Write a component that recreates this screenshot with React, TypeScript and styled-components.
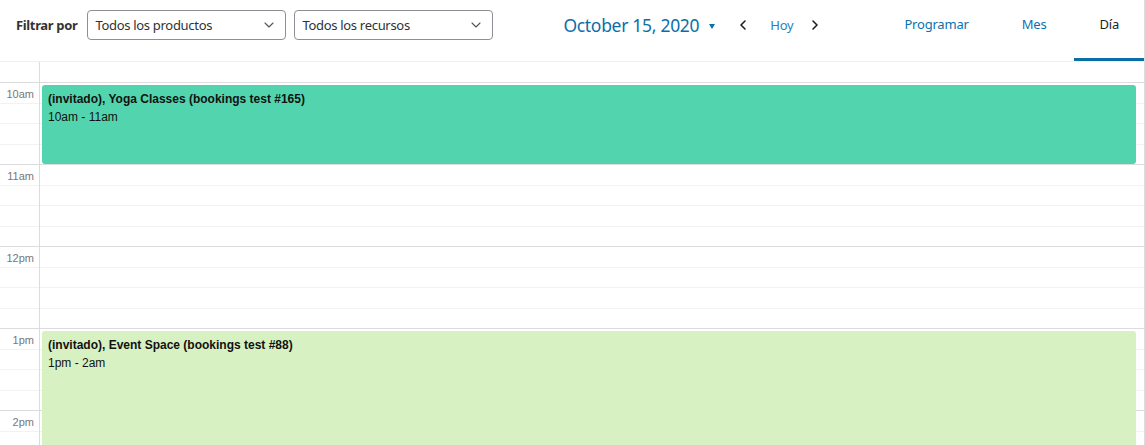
import React from "react";
import styled, { createGlobalStyle } from "styled-components";
import { ChevronDown, ChevronLeft, ChevronRight } from "lucide-react";

const GlobalStyle = createGlobalStyle`
  html, body {
    margin: 0;
    padding: 0;
    background: #fff;
    overflow: hidden;
  }
  body {
    font-family: "Noto Sans", "Open Sans", sans-serif;
    color: #1e1e1e;
  }
`;

const HOUR_HEIGHT = 82;

const Page = styled.div`
  width: 1145px;
  height: 445px;
  box-sizing: border-box;
  border-right: 1px solid #dcdcde;
  overflow: hidden;
`;

const Header = styled.div`
  display: flex;
  height: 62px;
  box-sizing: border-box;
  border-bottom: 1px solid #f0f0f0;
`;

const Filters = styled.div`
  display: flex;
  align-items: center;
  height: 50px;
  padding-left: 16px;
`;

const FilterLabel = styled.span`
  font-size: 13px;
  font-weight: 700;
  letter-spacing: -0.35px;
  color: #333;
  margin-right: 10px;
`;

const Select = styled.div`
  display: flex;
  align-items: center;
  justify-content: space-between;
  width: 199px;
  height: 30px;
  box-sizing: border-box;
  margin-right: 8px;
  padding: 0 8px 0 7px;
  border: 1px solid #8c8f94;
  border-radius: 4px;
  font-size: 13px;
  letter-spacing: -0.3px;
  color: #2c3338;
  svg {
    color: #50575e;
  }
`;

const DateNav = styled.div`
  display: flex;
  align-items: center;
  height: 50px;
  margin-left: 62px;
`;

const DateTitle = styled.span`
  font-size: 17.5px;
  color: #0b6ea8;
  letter-spacing: -0.3px;
`;

const Caret = styled.span`
  width: 0;
  height: 0;
  margin: 2px 0 0 10px;
  border-left: 3.5px solid transparent;
  border-right: 3.5px solid transparent;
  border-top: 5px solid #0b6ea8;
`;

const NavButton = styled.span<{ $ml: number }>`
  display: flex;
  align-items: center;
  color: #1e1e1e;
  margin-left: ${(p) => p.$ml}px;
`;

const Today = styled.span`
  font-size: 13px;
  letter-spacing: -0.2px;
  color: #2a7fbf;
  margin-left: 19px;
`;

const Tabs = styled.div`
  display: flex;
  margin-left: auto;
  gap: 3px;
`;

const Tab = styled.div<{ $active?: boolean }>`
  box-sizing: border-box;
  height: 61px;
  padding: 15px 25px 0;
  font-size: 13px;
  letter-spacing: -0.2px;
  color: ${(p) => (p.$active ? "#1e1e1e" : "#0b72ae")};
  border-bottom: 3px solid ${(p) => (p.$active ? "#0b6ea8" : "transparent")};
`;

const Grid = styled.div`
  display: flex;
  flex-direction: column;
`;

const Row = styled.div<{ $h: number }>`
  display: flex;
  height: ${(p) => p.$h}px;
  box-sizing: border-box;
  border-bottom: 1px solid #dcdcde;
`;

const Gutter = styled.div`
  width: 39px;
  flex-shrink: 0;
  border-right: 1px solid #dcdcde;
`;

const Body = styled.div`
  display: flex;
`;

const TimeColumn = styled.div`
  width: 39px;
  flex-shrink: 0;
  border-right: 1px solid #dcdcde;
`;

const DayColumn = styled.div`
  position: relative;
  flex: 1;
`;

const Slot = styled.div`
  height: ${HOUR_HEIGHT}px;
  box-sizing: border-box;
  border-bottom: 1px solid #dcdcde;
  display: flex;
  flex-direction: column;
`;

const Quarter = styled.div`
  flex: 1;
  & + & {
    border-top: 1px solid #f2f2f2;
  }
`;

const TimeLabel = styled.div`
  font-family: "Liberation Sans", Arial, sans-serif;
  font-size: 11px;
  color: #777;
  text-align: right;
  padding: 5px 5px 0 0;
  height: 0;
`;

const Event = styled.div<{ $bg: string }>`
  position: absolute;
  left: 2px;
  right: 8px;
  box-sizing: border-box;
  background: ${(p) => p.$bg};
  border-radius: 3px;
  padding: 5px 6px;
  font-family: "Liberation Sans", Arial, sans-serif;
  font-size: 12px;
  line-height: 18px;
  color: #111;
`;

const EventTitle = styled.div`
  font-weight: 700;
`;

const hours = ["10am", "11am", "12pm", "1pm", "2pm"];

const events = [
  {
    title: "(invitado), Yoga Classes (bookings test #165)",
    time: "10am - 11am",
    start: 0,
    end: 1,
    bg: "#52d5ae",
  },
  {
    title: "(invitado), Event Space (bookings test #88)",
    time: "1pm - 2am",
    start: 3,
    end: 5,
    bg: "#d7f1c2",
  },
];

function Slots({ labels }: { labels?: boolean }) {
  return (
    <>
      {hours.map((h) => (
        <Slot key={h}>
          <Quarter>{labels && <TimeLabel>{h}</TimeLabel>}</Quarter>
          <Quarter />
          <Quarter />
          <Quarter />
        </Slot>
      ))}
    </>
  );
}

export default function App() {
  return (
    <Page>
      <GlobalStyle />
      <Header>
        <Filters>
          <FilterLabel>Filtrar por</FilterLabel>
          <Select>
            Todos los productos
            <ChevronDown size={16} strokeWidth={1.6} />
          </Select>
          <Select>
            Todos los recursos
            <ChevronDown size={16} strokeWidth={1.6} />
          </Select>
        </Filters>
        <DateNav>
          <DateTitle>October 15, 2020</DateTitle>
          <Caret />
          <NavButton $ml={20}>
            <ChevronLeft size={16} strokeWidth={2.4} />
          </NavButton>
          <Today>Hoy</Today>
          <NavButton $ml={13}>
            <ChevronRight size={16} strokeWidth={2.4} />
          </NavButton>
        </DateNav>
        <Tabs>
          <Tab>Programar</Tab>
          <Tab>Mes</Tab>
          <Tab $active>Día</Tab>
        </Tabs>
      </Header>
      <Grid>
        <Row $h={21}>
          <Gutter />
        </Row>
        <Body>
          <TimeColumn>
            <Slots labels />
          </TimeColumn>
          <DayColumn>
            <Slots />
            {events.map((e) => (
              <Event
                key={e.title}
                $bg={e.bg}
                style={{
                  top: e.start * HOUR_HEIGHT + 2,
                  height: (e.end - e.start) * HOUR_HEIGHT - 3,
                }}
              >
                <EventTitle>{e.title}</EventTitle>
                <div>{e.time}</div>
              </Event>
            ))}
          </DayColumn>
        </Body>
      </Grid>
    </Page>
  );
}
